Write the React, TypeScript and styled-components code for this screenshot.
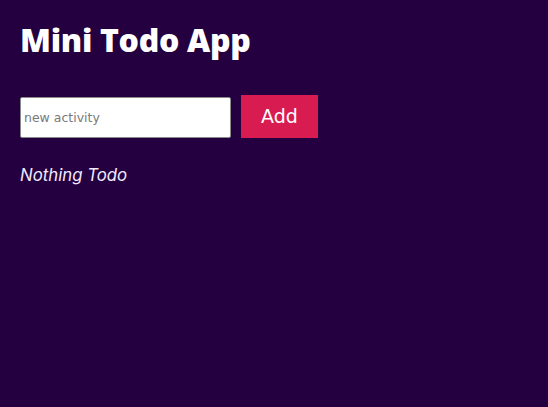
import React, { useState } from 'react';
import styled, { createGlobalStyle } from 'styled-components';

const GlobalStyle = createGlobalStyle`
  html, body {
    margin: 0;
    padding: 0;
    height: 100%;
    background: #240040;
  }
  #root {
    min-height: 100vh;
    background: #240040;
  }
`;

const Page = styled.div`
  padding: 18px 20px;
  font-family: "Open Sans", Inter, sans-serif;
  color: #ffffff;
`;

const Title = styled.h1`
  margin: 0 0 32px;
  font-size: 32px;
  font-weight: 800;
  letter-spacing: -0.3px;
  line-height: 44px;
`;

const Form = styled.form`
  display: flex;
  align-items: center;
  gap: 10px;
`;

const Input = styled.input`
  box-sizing: border-box;
  width: 211px;
  height: 41px;
  padding: 0 3px;
  border: 1px solid #8a8a8a;
  border-radius: 2px;
  background: #ffffff;
  font-family: "DejaVu Sans", sans-serif;
  font-size: 12.5px;
  color: #333;
  margin-top: 3px;
  &::placeholder {
    color: #7a7a7a;
  }
`;

const AddButton = styled.button`
  box-sizing: border-box;
  width: 77px;
  height: 43px;
  border: none;
  background: #d81b50;
  color: #ffffff;
  font-family: "DejaVu Sans", sans-serif;
  font-size: 19px;
  cursor: pointer;
`;

const Empty = styled.p`
  margin: 27px 0 0;
  font-family: Inter, sans-serif;
  font-style: italic;
  font-size: 16.8px;
  color: #f1eaff;
`;

export default function App() {
  const [value, setValue] = useState('');
  return (
    <>
      <GlobalStyle />
      <Page>
        <Title>Mini Todo App</Title>
        <Form onSubmit={(e) => e.preventDefault()}>
          <Input
            placeholder="new activity"
            value={value}
            onChange={(e) => setValue(e.target.value)}
          />
          <AddButton type="submit">Add</AddButton>
        </Form>
        <Empty>Nothing Todo</Empty>
      </Page>
    </>
  );
}
